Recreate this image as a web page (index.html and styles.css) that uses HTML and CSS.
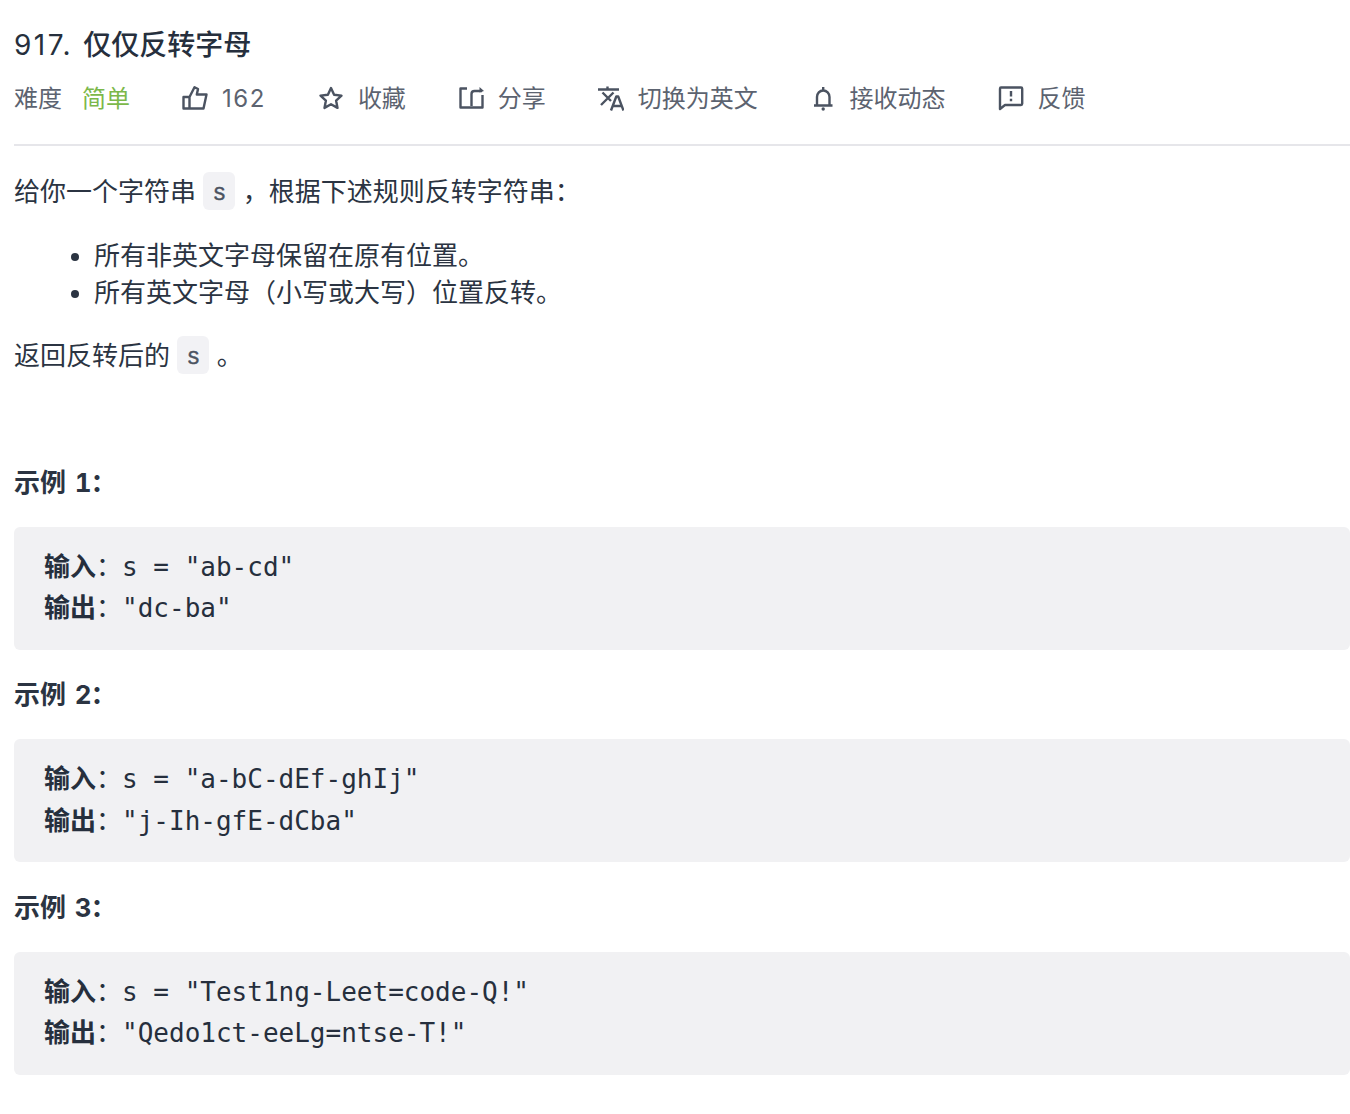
FILE: index.html
```html
<!DOCTYPE html>
<html lang="zh-CN">
<head>
<meta charset="utf-8">
<title>917. 仅仅反转字母</title>
<link rel="stylesheet" href="styles.css">
</head>
<body>
<main class="page">
  <h1 class="title"><span class="num">917.</span> 仅仅反转字母</h1>
  <div class="meta">
    <div class="item"><span>难度</span><span class="easy">简单</span></div>
    <div class="item"><svg class="icon" viewBox="0 0 26 26"><path d="M1.500 12H7.500V23.500H1.500zM7.500 12L12.500 2.200 16 4 14.800 9.500H24.500L21.500 23.500H7.500"/></svg><span class="count">162</span></div>
    <div class="item"><svg class="icon" viewBox="0 0 26 26"><path d="M13 3l3.100 6.700 7.400.9-5.400 5 1.400 7.300-6.500-3.600-6.500 3.600 1.400-7.300-5.400-5 7.400-.9z"/></svg><span>收藏</span></div>
    <div class="item"><svg class="icon" viewBox="0 0 26 26"><path d="M9 3.500H2.500v19h22V10M13.500 21V9c0-2 1-3 3-3H24"/><path class="dot" d="M21.500 2L26 6l-4.500 1.500z"/></svg><span>分享</span></div>
    <div class="item"><svg class="icon" viewBox="0 0 26 26"><path d="M0 4.500H21M9.500 1.500v3M4.500 7.500L13 16M15.500 7.500L3 20M13 25.500L18.300 11.500H20.200L25.500 25.500M15 21H23.500"/></svg><span>切换为英文</span></div>
    <div class="item"><svg class="icon" viewBox="0 0 26 26"><path d="M4 20.500H22.500M7 20V12c0-3.600 2.700-6.500 6.200-6.500s6.300 2.900 6.300 6.500v8M13.200 2v3.500"/><circle class="dot" cx="13.200" cy="24" r="1.700"/></svg><span>接收动态</span></div>
    <div class="item"><svg class="icon" viewBox="0 0 26 26"><path d="M3 2.500h20c.8 0 1.200.4 1.200 1.200v15.100c0 .8-.4 1.200-1.200 1.200H7L2 24V3.700c0-.8.200-1.200 1-1.200zM13 6v5.500M13 13.700v2.500"/></svg><span>反馈</span></div>
  </div>
  <hr class="rule">
  <p>给你一个字符串 <code>s</code> ，根据下述规则反转字符串：</p>
  <ul>
    <li>所有非英文字母保留在原有位置。</li>
    <li>所有英文字母（小写或大写）位置反转。</li>
  </ul>
  <p>返回反转后的 <code>s</code> 。</p>
  <p class="spacer">&nbsp;</p>
  <p class="example"><strong>示例 <span class="digit">1</span>：</strong></p>
  <pre><strong>输入</strong><b class="colon">：</b>s = "ab-cd"
<strong>输出</strong><b class="colon">：</b>"dc-ba"</pre>
  <p class="example"><strong>示例 <span class="digit">2</span>：</strong></p>
  <pre><strong>输入</strong><b class="colon">：</b>s = "a-bC-dEf-ghIj"
<strong>输出</strong><b class="colon">：</b>"j-Ih-gfE-dCba"</pre>
  <p class="example"><strong>示例 <span class="digit">3</span>：</strong></p>
  <pre><strong>输入</strong><b class="colon">：</b>s = "Test1ng-Leet=code-Q!"
<strong>输出</strong><b class="colon">：</b>"Qedo1ct-eeLg=ntse-T!"</pre>
</main>
</body>
</html>
```
FILE: styles.css
```css
* { box-sizing: border-box; }
html, body { margin: 0; background: #fff; }
body {
  font-family: Inter, "Noto Sans CJK SC", sans-serif;
  color: #2b3442;
  font-size: 26px;
  line-height: 37px;
}
.page { padding: 25px 0 39px 14px; }
.title {
  margin: 0;
  font-size: 28px;
  line-height: 40px;
  font-weight: 500;
  color: #262f3d;
}
.num { letter-spacing: 2.500px; margin-right: 2.500px; font-weight: 400; }
.meta {
  display: flex;
  align-items: center;
  gap: 52.400px;
  margin-top: 13px;
  height: 40px;
  font-size: 24px;
  color: #5c6370;
}
.item { display: flex; align-items: center; gap: 13.500px; white-space: nowrap; }
.easy { color: #7cb84a; margin-left: 6.500px; }
.icon {
  width: 26px;
  height: 26px;
  fill: none;
  stroke: #4b5361;
  stroke-width: 2.400;
  stroke-linejoin: round;
  flex: none;
}
.dot { fill: #4b5361; stroke: none; }
.count { letter-spacing: 1.600px; }
.rule { border: 0; height: 2px; background: #e6e6ea; margin: 26px 0 0; }
p { margin: 0; }
.rule + p { margin-top: 27px; }
code {
  font-family: "Liberation Mono", monospace;
  font-size: 23px;
  line-height: 1;
  vertical-align: 1px;
  padding: 8.800px 9.100px 3.100px;
  background: #f2f2f5;
  border-radius: 6px;
  color: #4b5361;
  -webkit-text-stroke: .4px #4b5361;
}
ul { margin: 27px 0 0; padding: 0 0 0 80px; }
li { line-height: 37px; }
ul + p { margin-top: 26px; }
.spacer { margin-top: 26px; height: 37px; }
.example { margin-top: 26.500px; }
.digit { margin-left: 2.500px; margin-right: -1px; font-variant-numeric: tabular-nums; }
pre {
  margin: 26px 0 0;
  padding: 20px 30px;
  background: #f1f1f3;
  border-radius: 6px;
  font-family: "DejaVu Sans Mono", "Noto Sans CJK SC", monospace;
  font-size: 26px;
  line-height: 41.600px;
  color: #262f3d;
}
strong { font-weight: 700; }
pre strong, .colon { font-family: "Noto Sans CJK SC", sans-serif; line-height: 1; }
.colon { font-weight: 400; }
```
